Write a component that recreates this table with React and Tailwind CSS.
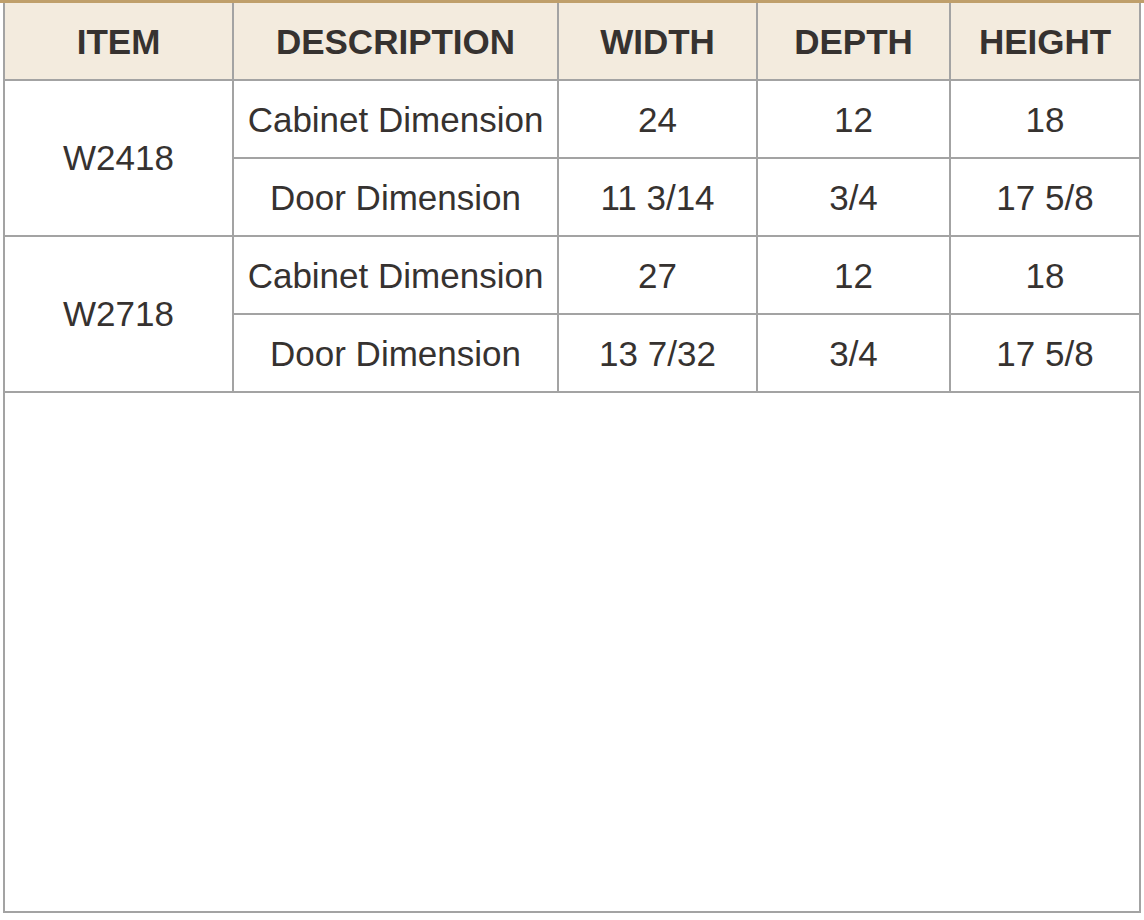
const rows = [
  {
    item: "W2418",
    lines: [
      ["Cabinet Dimension", "24", "12", "18"],
      ["Door Dimension", "11 3/14", "3/4", "17 5/8"],
    ],
  },
  {
    item: "W2718",
    lines: [
      ["Cabinet Dimension", "27", "12", "18"],
      ["Door Dimension", "13 7/32", "3/4", "17 5/8"],
    ],
  },
];

const headers = ["ITEM", "DESCRIPTION", "WIDTH", "DEPTH", "HEIGHT"];

export default function App() {
  return (
    <div className="w-[1144px] h-[920px] bg-white border-t-[3px] border-[#bf9f6b] font-['Liberation_Sans',Arial,sans-serif] text-[#363230]">
      <table className="ml-[3px] w-[1136px] table-fixed border-collapse">
        <colgroup>
          <col className="w-[229px]" />
          <col className="w-[325px]" />
          <col className="w-[199px]" />
          <col className="w-[193px]" />
          <col className="w-[190px]" />
        </colgroup>
        <thead>
          <tr className="bg-[#f3ebde]">
            {headers.map((h) => (
              <th
                key={h}
                className="h-[77px] border-2 border-t-0 border-[#a3a3a3] text-[35px] font-bold text-center align-middle p-0 pt-[2px]"
              >
                {h}
              </th>
            ))}
          </tr>
        </thead>
        <tbody>
          {rows.map((r) =>
            r.lines.map((line, i) => (
              <tr key={r.item + i}>
                {i === 0 && (
                  <td
                    rowSpan={2}
                    className="border-2 border-[#a3a3a3] text-[35px] text-center align-middle p-0"
                  >
                    {r.item}
                  </td>
                )}
                {line.map((v, j) => (
                  <td
                    key={j}
                    className="h-[78px] border-2 border-[#a3a3a3] text-[35px] text-center align-middle p-0 pt-[2px]"
                  >
                    {v}
                  </td>
                ))}
              </tr>
            ))
          )}
          <tr>
            <td colSpan={5} className="h-[520px] border-2 border-[#a3a3a3] p-0"></td>
          </tr>
        </tbody>
      </table>
    </div>
  );
}
